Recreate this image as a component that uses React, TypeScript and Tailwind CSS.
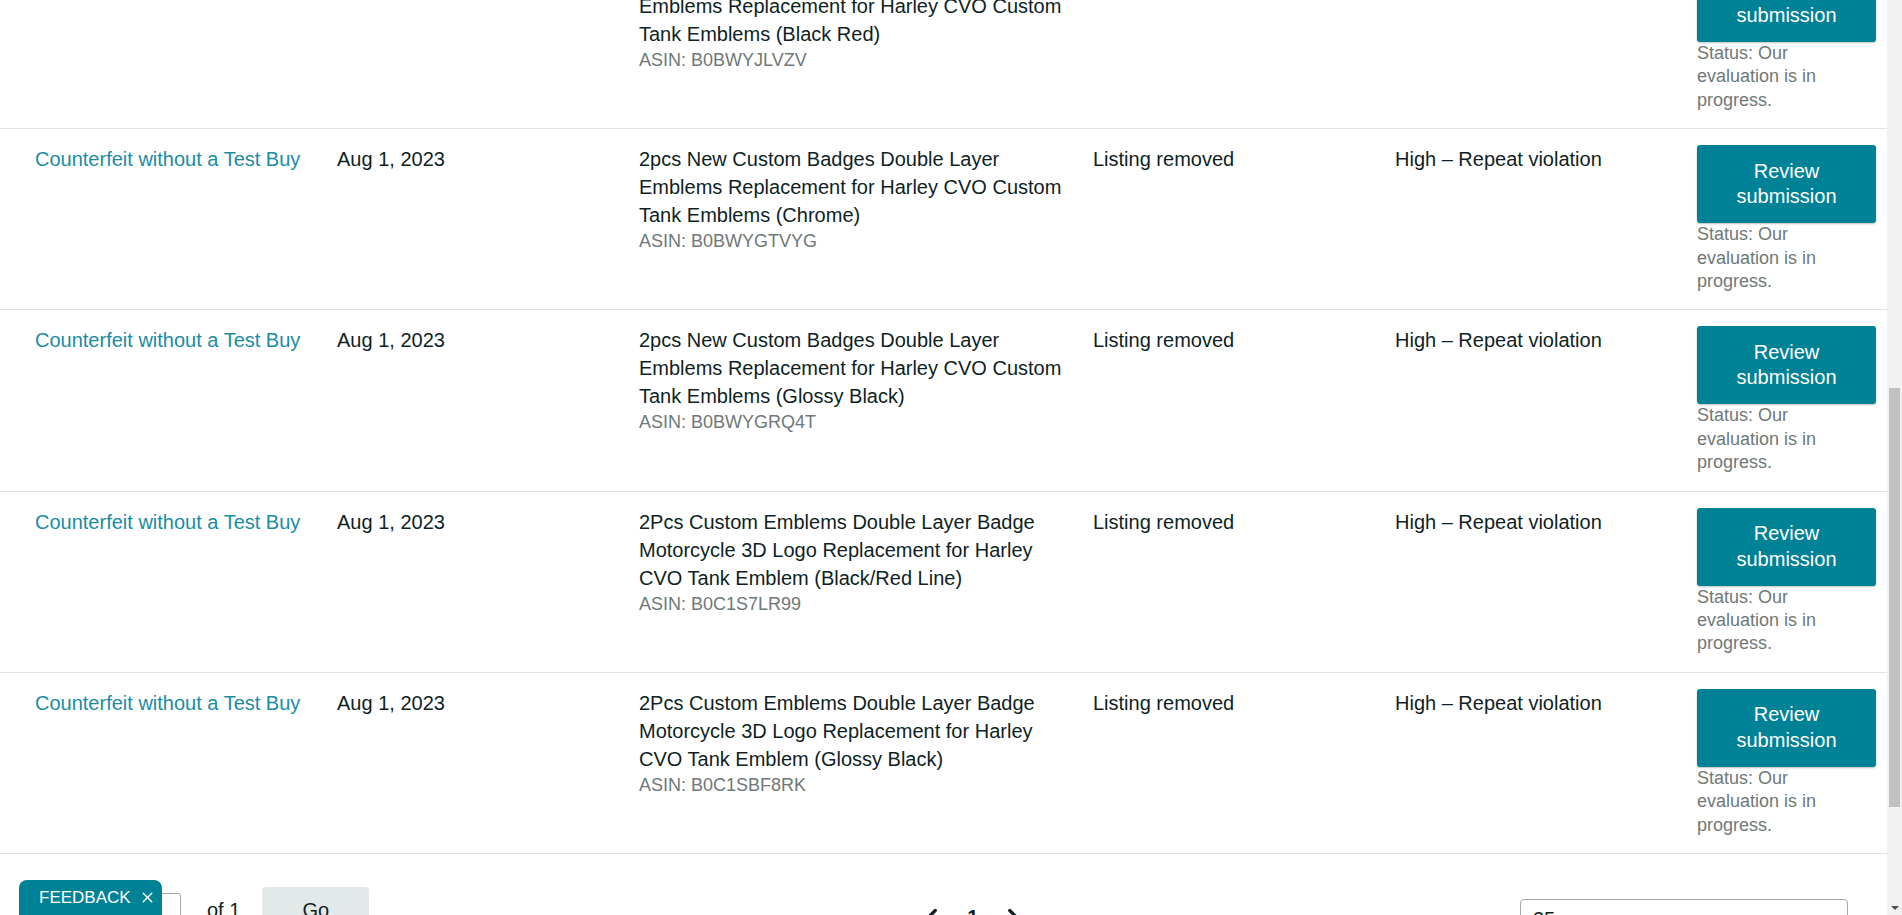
import * as React from "react";
import { ChevronDown, ChevronLeft, ChevronRight, X } from "lucide-react";

interface Violation {
  title: string;
  asin: string;
}

const rows: Violation[] = [
  {
    title: "2pcs New Custom Badges Double Layer Emblems Replacement for Harley CVO Custom Tank Emblems (Black Red)",
    asin: "B0BWYJLVZV",
  },
  {
    title: "2pcs New Custom Badges Double Layer Emblems Replacement for Harley CVO Custom Tank Emblems (Chrome)",
    asin: "B0BWYGTVYG",
  },
  {
    title: "2pcs New Custom Badges Double Layer Emblems Replacement for Harley CVO Custom Tank Emblems (Glossy Black)",
    asin: "B0BWYGRQ4T",
  },
  {
    title: "2Pcs Custom Emblems Double Layer Badge Motorcycle 3D Logo Replacement for Harley CVO Tank Emblem (Black/Red Line)",
    asin: "B0C1S7LR99",
  },
  {
    title: "2Pcs Custom Emblems Double Layer Badge Motorcycle 3D Logo Replacement for Harley CVO Tank Emblem (Glossy Black)",
    asin: "B0C1SBF8RK",
  },
];

function ViolationRow({ row }: { row: Violation }) {
  return (
    <div className="grid grid-cols-[302px_302px_454px_302px_302px_1fr] border-b border-[#e3e3e3] py-4 pl-[35px] text-[20px] leading-[28px] text-[#0f1f24]">
      <div>
        <a href="#" className="text-[#1a8ca3]">
          Counterfeit without a Test Buy
        </a>
      </div>
      <div>Aug 1, 2023</div>
      <div className="pr-[14px]">
        <div>{row.title}</div>
        <div className="text-[18px] leading-[24px] text-[#6f7878]">ASIN: {row.asin}</div>
      </div>
      <div>Listing removed</div>
      <div>High – Repeat violation</div>
      <div className="pr-[11px]">
        <button
          type="button"
          className="h-[78px] w-[179px] rounded-[3px] bg-[#008296] px-6 text-[20px] leading-[25.5px] text-white shadow-[0_1px_2px_rgba(0,0,0,0.25)]"
        >
          Review submission
        </button>
        <p className="w-[160px] text-[18px] leading-[23.4px] text-[#6f7878]">
          Status: Our evaluation is in progress.
        </p>
      </div>
    </div>
  );
}

export default function App() {
  return (
    <div className="flex h-[915px] w-full overflow-hidden bg-white font-['Liberation_Sans',Arial,sans-serif]">
      <div className="relative flex-1 overflow-hidden">
        <div className="mt-[-52px]">
          {rows.map((r) => (
            <ViolationRow key={r.asin} row={r} />
          ))}
        </div>

        {/* pager */}
        <div className="flex items-start">
          <div className="ml-[117px] mt-[32.5px] flex h-[46px] items-center">
            <input
              defaultValue="1"
              className="h-[34px] w-[64px] rounded-[3px] border border-[#a6a6a6] px-2 text-[20px] text-[#0f1f24] outline-none"
            />
            <span className="ml-[26px] text-[20px] leading-[28px] text-[#0f1f24]">of 1</span>
            <button
              type="button"
              className="ml-[22px] h-[46px] w-[107px] rounded-[4px] bg-[#e3e9e9] text-[20px] text-[#0f1f24]"
            >
              Go
            </button>
          </div>

          <div className="ml-[550px] mt-[50px] flex items-center gap-[22px] text-[#0f1f24]">
            <ChevronLeft size={26} strokeWidth={3} />
            <span className="text-[20px] font-bold leading-[26px]">1</span>
            <ChevronRight size={26} strokeWidth={3} />
          </div>

          <div className="ml-auto mr-[39px] mt-[44.5px] flex h-[40px] w-[328px] items-center justify-between rounded-[4px] border border-[#a6a6a6] pl-[12px] pr-[14px] text-[20px] text-[#0f1f24]">
            <span>25 per page</span>
            <ChevronDown size={20} strokeWidth={2} className="text-[#6f7878]" />
          </div>
        </div>

        {/* feedback tab */}
        <div className="absolute left-[19px] top-[880px] flex h-[50px] w-[143px] items-start gap-[8px] rounded-t-[8px] bg-[#008296] pl-[20px] pt-[8px] text-[17px] leading-[20px] text-white">
          <span>FEEDBACK</span>
          <X size={17} strokeWidth={2} className="mt-[1px]" />
        </div>
      </div>

      {/* scrollbar */}
      <div className="flex w-[15px] flex-col bg-[#f1f1f1]">
        <div className="h-[388px]" />
        <div className="mx-[2px] h-[419px] bg-[#c1c1c1]" />
        <div className="flex-1" />
        <div className="flex h-[15px] items-center justify-center">
          <div className="h-0 w-0 border-l-[4px] border-r-[4px] border-t-[4px] border-l-transparent border-r-transparent border-t-[#505050]" />
        </div>
      </div>
    </div>
  );
}
